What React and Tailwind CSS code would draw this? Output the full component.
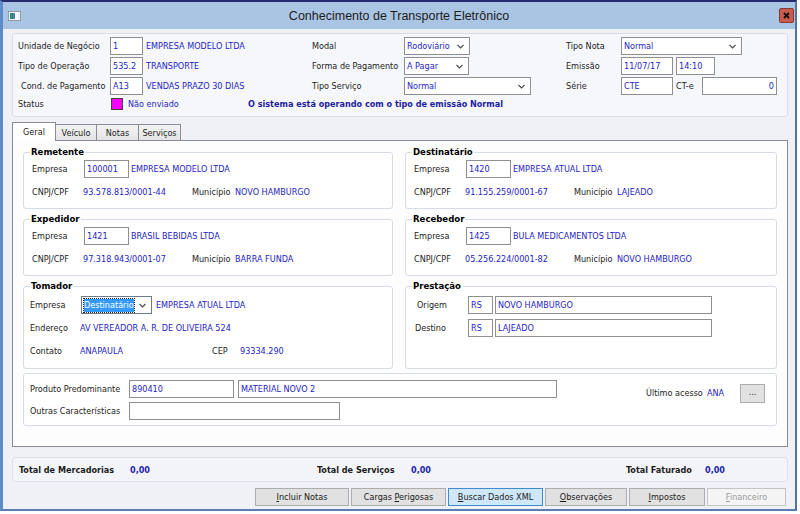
import React from 'react';

const BLUE = 'text-[#2424c4]';

const Chevron = () => (
  <svg width="7" height="5" viewBox="0 0 7 5" className="shrink-0">
    <path d="M0.5 1L3.5 4L6.5 1" fill="none" stroke="#4a4a4a" strokeWidth="1.1" />
  </svg>
);

function Field({ className = '', right = false, children }) {
  return (
    <div
      className={`flex h-[18px] shrink-0 items-center border border-[#8e8f92] bg-white px-[2px] ${BLUE} ${
        right ? 'justify-end' : ''
      } ${className}`}
    >
      {children}
    </div>
  );
}

function Select({ className = '', value, focused = false }) {
  return (
    <div
      className={`flex h-[18px] shrink-0 items-center justify-between border bg-white pl-[2px] pr-[5px] ${
        focused ? 'border-[#6d7a8c]' : 'border-[#8e8f92]'
      } ${className}`}
    >
      {focused ? (
        <span className="shrink-0 whitespace-nowrap bg-[#3399ff] leading-[13px] text-white outline-1 outline-dotted outline-[#222]">
          {value}
        </span>
      ) : (
        <span className={BLUE}>{value}</span>
      )}
      <Chevron />
    </div>
  );
}

function Group({ title, className = '', children }) {
  return (
    <fieldset className={`min-w-0 rounded-[3px] border border-[#d6dce3] bg-white ${className}`}>
      <legend className="ml-[6px] px-[1px] text-[9.5px] font-bold leading-[12px] text-black">{title}</legend>
      {children}
    </fieldset>
  );
}

function Party({ title, code, name, cnpj, city }) {
  return (
    <Group title={title} className="h-[63px]">
      <div className="pl-[8px] pt-[2px]">
        <div className="flex h-[18px] items-center">
          <span className="w-[52px] shrink-0">Empresa</span>
          <Field className="w-[45px]">{code}</Field>
          <span className={`ml-[2px] ${BLUE}`}>{name}</span>
        </div>
        <div className="mt-[7px] flex h-[14px] items-center">
          <span className="w-[51px] shrink-0">CNPJ/CPF</span>
          <span className={`w-[109px] shrink-0 ${BLUE}`}>{cnpj}</span>
          <span className="w-[43px] shrink-0">Município</span>
          <span className={BLUE}>{city}</span>
        </div>
      </div>
    </Group>
  );
}

function Btn({ className = '', variant = 'normal', children }) {
  const styles = {
    normal: 'border-[#adadad] bg-[#e1e1e1] text-[#1a1a1a]',
    hot: 'border-[#3c8ccc] bg-[#cfe8f9] text-[#1a1a1a]',
    disabled: 'border-[#c4c4c4] bg-[#f4f4f4] text-[#9a9a9a]',
  };
  return (
    <div className={`flex h-[18px] shrink-0 items-center justify-center border ${styles[variant]} ${className}`}>
      <span className="whitespace-nowrap">{children}</span>
    </div>
  );
}

const parties = [
  { title: 'Remetente', code: '100001', name: 'EMPRESA MODELO LTDA', cnpj: '93.578.813/0001-44', city: 'NOVO HAMBURGO' },
  { title: 'Destinatário', code: '1420', name: 'EMPRESA ATUAL LTDA', cnpj: '91.155.259/0001-67', city: 'LAJEADO' },
  { title: 'Expedidor', code: '1421', name: 'BRASIL BEBIDAS LTDA', cnpj: '97.318.943/0001-07', city: 'BARRA FUNDA' },
  { title: 'Recebedor', code: '1425', name: 'BULA MEDICAMENTOS LTDA', cnpj: '05.256.224/0001-82', city: 'NOVO HAMBURGO' },
];

export default function App() {
  return (
    <div className="relative h-[514px] w-[800px] overflow-hidden bg-white font-['DejaVu_Sans_Condensed','DejaVu_Sans',sans-serif] text-[9px] leading-[12px] text-[#1c1c1c] font-stretch-condensed">
      {/* Window */}
      <div className="flex h-[511px] w-[797px] flex-col border-t-2 border-r-2 border-b-2 border-l-[3px] border-t-[#26296b] border-r-[#56739c] border-b-[#5b7fb0] border-l-[#5f8cc6] bg-[#eff1f7]">
        {/* Title bar */}
        <div className="grid h-[27px] shrink-0 grid-cols-[1fr_auto_1fr] items-center bg-[#aac5e3]">
          <div className="pl-[5px]">
            <svg width="13" height="10" viewBox="0 0 13 10">
              <rect x="0.5" y="0.5" width="12" height="9" fill="#f4f6f9" stroke="#8e99a8" />
              <rect x="2" y="2" width="3" height="6" fill="#2f8a6c" />
              <rect x="5" y="2" width="2" height="6" fill="#4a78b8" />
            </svg>
          </div>
          <div className="font-['Liberation_Sans',Arial,sans-serif] text-[12.5px] text-[#1b1b1b] font-stretch-normal">
            Conhecimento de Transporte Eletrônico
          </div>
          <div className="flex justify-end pr-[1px]">
            <div className="flex h-[15px] w-[15px] items-center justify-center rounded-[2px] border border-[#8a3a33] bg-[#c95a4e]">
              <svg width="7" height="7" viewBox="0 0 7 7">
                <path d="M1 1L6 6M6 1L1 6" stroke="#111" strokeWidth="1.8" />
              </svg>
            </div>
          </div>
        </div>

        {/* Body */}
        <div className="flex flex-1 flex-col pl-[9px] pr-[7px]">
          {/* Header panel */}
          <div className="mt-[4px] flex h-[84px] shrink-0 flex-col gap-[2px] rounded-[3px] border border-[#d9dde6] bg-[#f6f7fb] pl-[5px] pt-[3px]">
            <div className="flex h-[18px] items-center">
              <div className="flex w-[294px] items-center">
                <span className="w-[92px] shrink-0">Unidade de Negócio</span>
                <Field className="w-[33px]">1</Field>
                <span className={`ml-[3px] ${BLUE}`}>EMPRESA MODELO LTDA</span>
              </div>
              <div className="flex w-[254px] items-center">
                <span className="w-[92px] shrink-0">Modal</span>
                <Select className="w-[66px]" value="Rodoviário" />
              </div>
              <div className="flex items-center">
                <span className="w-[55px] shrink-0">Tipo Nota</span>
                <Select className="w-[121px]" value="Normal" />
              </div>
            </div>

            <div className="flex h-[18px] items-center">
              <div className="flex w-[294px] items-center">
                <span className="w-[92px] shrink-0">Tipo de Operação</span>
                <Field className="w-[33px]">535.2</Field>
                <span className={`ml-[3px] ${BLUE}`}>TRANSPORTE</span>
              </div>
              <div className="flex w-[254px] items-center">
                <span className="w-[92px] shrink-0">Forma de Pagamento</span>
                <Select className="w-[65px]" value="A Pagar" />
              </div>
              <div className="flex items-center">
                <span className="w-[55px] shrink-0">Emissão</span>
                <Field className="w-[52px]">11/07/17</Field>
                <Field className="ml-[3px] w-[39px]">14:10</Field>
              </div>
            </div>

            <div className="flex h-[18px] items-center">
              <div className="flex w-[294px] items-center">
                <span className="w-[92px] shrink-0 pl-[3px]">Cond. de Pagamento</span>
                <Field className="w-[33px]">A13</Field>
                <span className={`ml-[3px] ${BLUE}`}>VENDAS PRAZO 30 DIAS</span>
              </div>
              <div className="flex w-[254px] items-center">
                <span className="w-[92px] shrink-0">Tipo Serviço</span>
                <Select className="w-[127px]" value="Normal" />
              </div>
              <div className="flex items-center">
                <span className="w-[55px] shrink-0">Série</span>
                <Field className="w-[52px]">CTE</Field>
                <span className="w-[29px] shrink-0 pl-[3px]">CT-e</span>
                <Field className="w-[75px]" right>
                  0
                </Field>
              </div>
            </div>

            <div className="flex h-[14px] items-center">
              <span className="w-[92px] shrink-0">Status</span>
              <div className="flex w-[138px] shrink-0 items-center">
                <span className="ml-[1px] h-[12px] w-[12px] border border-[#444] bg-[#ff00ff]" />
                <span className={`ml-[5px] ${BLUE}`}>Não enviado</span>
              </div>
              <span className="font-bold text-[#1d1d9e]">O sistema está operando com o tipo de emissão Normal</span>
            </div>
          </div>

          {/* Tabs */}
          <div className="mt-[5px] flex h-[18px] shrink-0 items-end">
            <div className="relative z-10 -mb-px flex h-[19px] w-[44px] items-center justify-center border border-b-0 border-[#898c95] bg-white">
              Geral
            </div>
            <div className="-ml-px flex h-[16px] w-[42px] items-center justify-center border border-b-0 border-[#898c95] bg-linear-to-b from-[#f3f3f3] to-[#e4e4e4]">
              Veículo
            </div>
            <div className="-ml-px flex h-[16px] w-[43px] items-center justify-center border border-b-0 border-[#898c95] bg-linear-to-b from-[#f3f3f3] to-[#e4e4e4]">
              Notas
            </div>
            <div className="-ml-px flex h-[16px] w-[43px] items-center justify-center border border-b-0 border-[#898c95] bg-linear-to-b from-[#f3f3f3] to-[#e4e4e4]">
              Serviços
            </div>
          </div>

          {/* Tab panel */}
          <div className="h-[307px] shrink-0 border border-[#898c95] bg-[#fdfdfd] pl-[10px] pr-[9px] pt-[5px]">
            <div className="grid grid-cols-[370px_372px] gap-x-[12px] gap-y-[4px]">
              {parties.map((p) => (
                <Party key={p.title} {...p} />
              ))}

              <Group title="Tomador" className="h-[89px]">
                <div className="pl-[6px] pt-[4px]">
                  <div className="flex h-[18px] items-center">
                    <span className="w-[51px] shrink-0">Empresa</span>
                    <Select className="w-[71px]" value="Destinatário" focused />
                    <span className={`ml-[4px] ${BLUE}`}>EMPRESA ATUAL LTDA</span>
                  </div>
                  <div className="mt-[7px] flex h-[14px] items-center">
                    <span className="w-[50px] shrink-0">Endereço</span>
                    <span className={BLUE}>AV VEREADOR A. R. DE OLIVEIRA 524</span>
                  </div>
                  <div className="mt-[9px] flex h-[14px] items-center">
                    <span className="w-[50px] shrink-0">Contato</span>
                    <span className={`w-[132px] shrink-0 ${BLUE}`}>ANAPAULA</span>
                    <span className="w-[28px] shrink-0">CEP</span>
                    <span className={BLUE}>93334.290</span>
                  </div>
                </div>
              </Group>

              <Group title="Prestação" className="h-[89px]">
                <div className="pl-[9px] pt-[4px]">
                  <div className="flex h-[18px] items-center">
                    <span className="w-[53px] shrink-0 pl-[2px]">Origem</span>
                    <Field className="w-[25px]">RS</Field>
                    <Field className="ml-[2px] w-[217px]">NOVO HAMBURGO</Field>
                  </div>
                  <div className="mt-[5px] flex h-[18px] items-center">
                    <span className="w-[53px] shrink-0">Destino</span>
                    <Field className="w-[25px]">RS</Field>
                    <Field className="ml-[2px] w-[217px]">LAJEADO</Field>
                  </div>
                </div>
              </Group>

              <div className="col-span-2 flex h-[53px] rounded-[3px] border border-[#d6dce3] bg-white pl-[6px] pr-[11px]">
                <div className="pt-[6px]">
                  <div className="flex h-[18px] items-center">
                    <span className="w-[99px] shrink-0">Produto Predominante</span>
                    <Field className="w-[105px]">890410</Field>
                    <Field className="ml-[4px] w-[319px]">MATERIAL NOVO 2</Field>
                  </div>
                  <div className="mt-[4px] flex h-[18px] items-center">
                    <span className="w-[99px] shrink-0">Outras Características</span>
                    <Field className="w-[211px]" />
                  </div>
                </div>
                <div className="ml-auto mt-[10px] flex h-[18px] items-center self-start">
                  <span className="w-[61px] shrink-0">Último acesso</span>
                  <span className={`w-[33px] shrink-0 ${BLUE}`}>ANA</span>
                  <div className="flex h-[19px] w-[25px] items-center justify-center border border-[#adadad] bg-[#e1e1e1] pb-[3px]">
                    ...
                  </div>
                </div>
              </div>
            </div>
          </div>

          {/* Totals */}
          <div className="mt-[10px] flex h-[25px] shrink-0 items-center rounded-[3px] border border-[#dde1ea] bg-[#f3f4f8] pl-[6px] font-bold">
            <span className="w-[111px] shrink-0">Total de Mercadorias</span>
            <span className="w-[187px] shrink-0 text-[#1d1dae]">0,00</span>
            <span className="w-[94px] shrink-0">Total de Serviços</span>
            <span className="w-[215px] shrink-0 text-[#1d1dae]">0,00</span>
            <span className="w-[79px] shrink-0">Total Faturado</span>
            <span className="text-[#1d1dae]">0,00</span>
          </div>

          {/* Buttons */}
          <div className="mt-[6px] flex h-[18px] shrink-0 gap-[2px] pl-[243px]">
            <Btn className="w-[94px]">
              <u>I</u>ncluir Notas
            </Btn>
            <Btn className="w-[95px]">
              Cargas <u>P</u>erigosas
            </Btn>
            <Btn className="w-[95px]" variant="hot">
              <u>B</u>uscar Dados XML
            </Btn>
            <Btn className="w-[82px]">
              <u>O</u>bservações
            </Btn>
            <Btn className="w-[76px]">
              <u>I</u>mpostos
            </Btn>
            <Btn className="w-[79px]" variant="disabled">
              <u>F</u>inanceiro
            </Btn>
          </div>
        </div>
      </div>
    </div>
  );
}
